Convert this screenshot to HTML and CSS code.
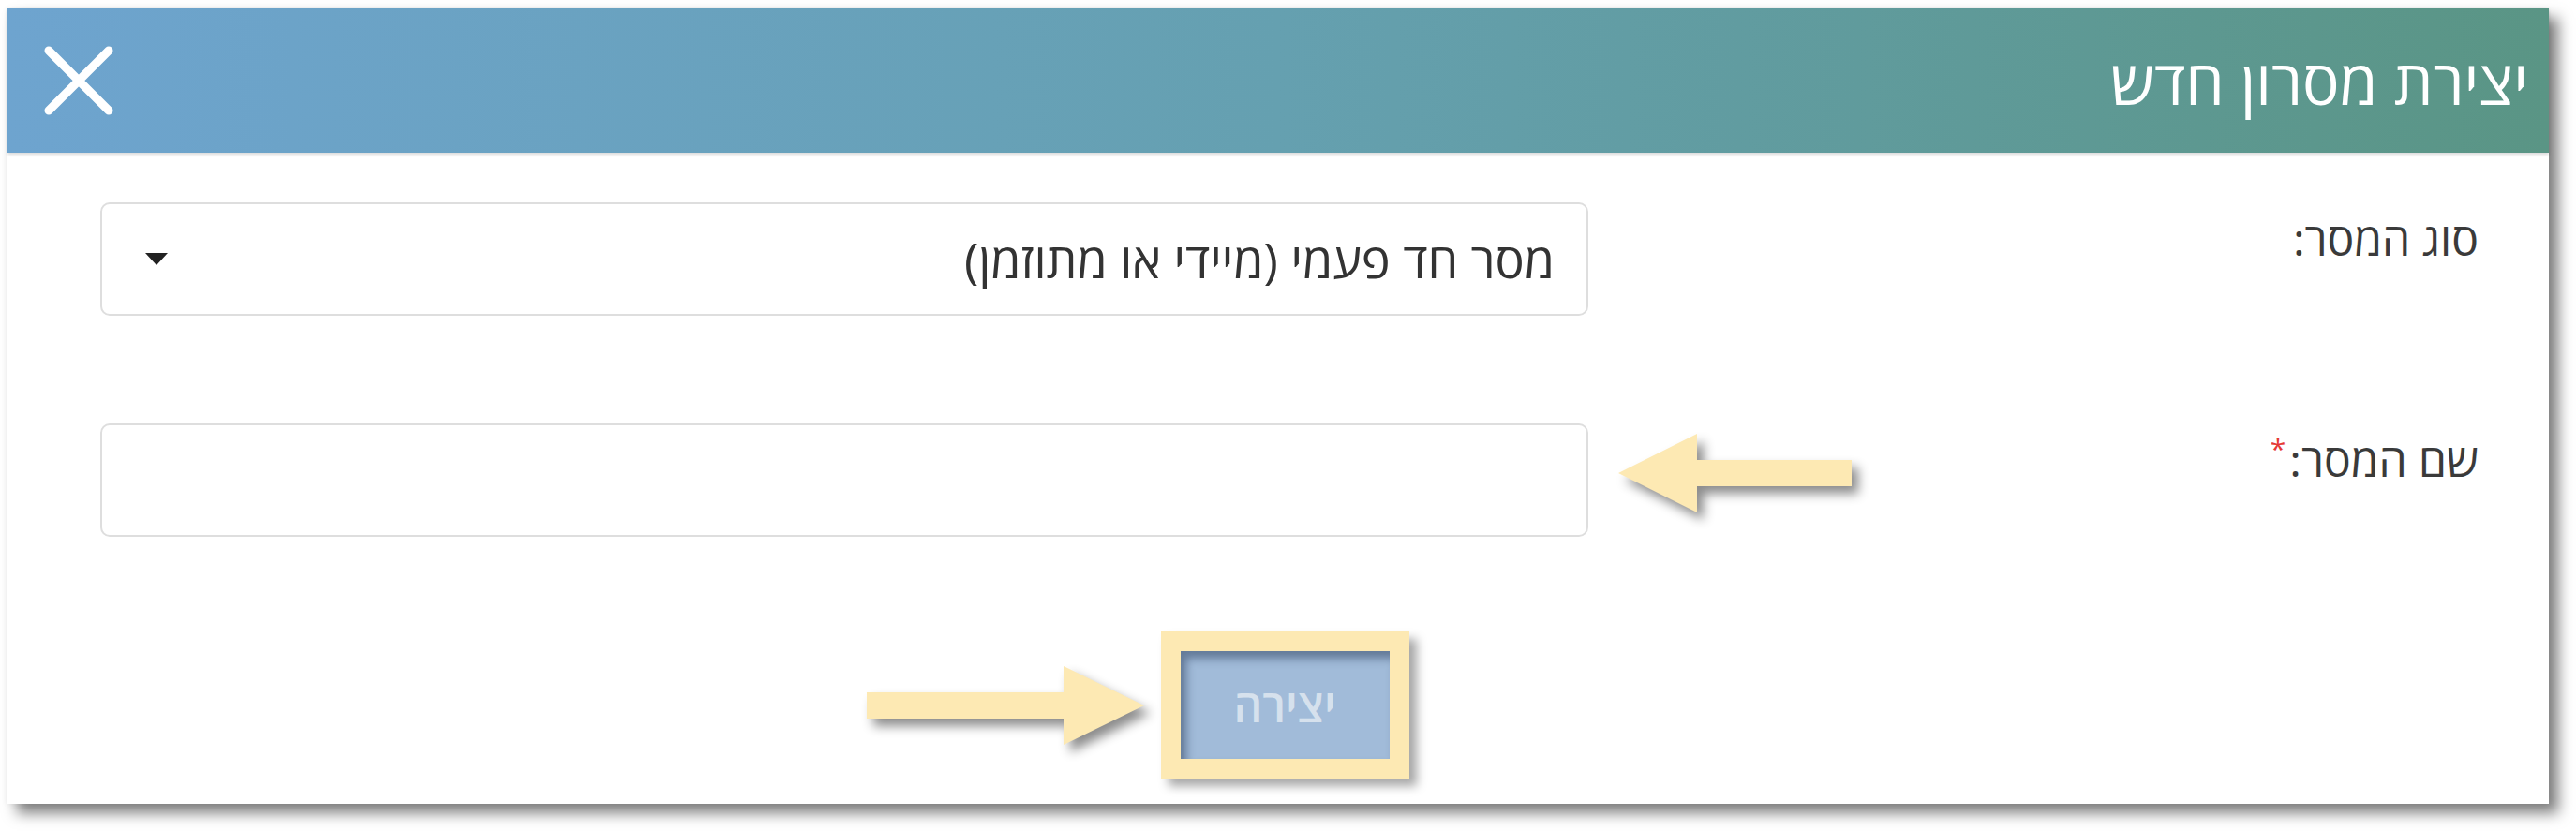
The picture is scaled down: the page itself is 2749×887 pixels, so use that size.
FILE: index.html
```html
<!DOCTYPE html>
<html lang="he" dir="rtl">
<head>
    <meta charset="UTF-8">
    <title>יצירת מסרון חדש</title>
    <link rel="stylesheet" href="styles.css">
</head>
<body>
    <div class="dialog">
        <div class="dialog-head">
            <h1 class="dialog-title">יצירת מסרון חדש</h1>
            <button class="close-btn" type="button" aria-label="סגירה">
                <svg width="74" height="74" viewBox="0 0 74 74">
                    <path d="M5 5 L69 69 M69 5 L5 69" stroke="#fff" stroke-width="9" stroke-linecap="round" fill="none"/>
                </svg>
            </button>
        </div>
        <form class="dialog-body">
            <div class="row">
                <label class="row-label">סוג המסר:</label>
                <div class="field select">
                    <span class="select-text">מסר חד פעמי (מיידי או מתוזמן)</span>
                    <span class="caret"></span>
                </div>
            </div>
            <div class="row row-name">
                <label class="row-label">שם המסר:<span class="req">*</span></label>
                <div class="field-wrap">
                    <div class="field"></div>
                    <!-- annotation arrow -->
                    <svg class="hint-arrow arrow-left" width="249" height="84" viewBox="0 0 249 84">
                        <polygon points="0,42 84,0 84,28 249,28 249,56 84,56 84,84" fill="#fde9b3"/>
                    </svg>
                </div>
            </div>
            <div class="actions">
                <div class="highlight">
                    <svg class="hint-arrow arrow-right" width="296" height="84" viewBox="0 0 296 84">
                        <polygon points="0,28 210,28 210,0 296,42 210,84 210,56 0,56" fill="#fde9b3"/>
                    </svg>
                    <button class="submit" type="button">יצירה</button>
                </div>
            </div>
        </form>
    </div>
</body>
</html>
```

FILE: styles.css
```css
html, body, h1 {margin: 0; padding: 0;}
body {background: #fff; font-family: "Open Sans", "Liberation Sans", sans-serif; color: #333; min-height: 887px; overflow: hidden;}

.dialog {margin: 9px auto 0 8px; width: 2712px; height: 849px; background: #fff; box-shadow: 10px 10px 14px rgba(0,0,0,.5), -1px 0 6px rgba(0,0,0,.06);}

.dialog-head {height: 154px; display: flex; align-items: center; justify-content: space-between; padding: 0 22px 0 39px; background: linear-gradient(to right, #6ea4cf, #65a0b0 50%, #5a9585); box-shadow: 0 2px 3px rgba(0,0,0,.15);}
.dialog-title {font-size: 66px; font-weight: normal; color: #fff; line-height: 1;}
.close-btn {border: 0; padding: 0; background: none; display: flex;}

.dialog-body {padding: 53px 75px 0 99px;}
.row {display: grid; grid-template-columns: 1fr 1588px;}
.row-name {margin-top: 115px;}
.row-label {font-size: 48px; padding-top: 6px; color: #3a3a3a;}
.req {color: #e53935; font-size: 30px; vertical-align: top; margin-right: 4px;}

.field {height: 117px; border: 2px solid #dedede; border-radius: 10px; background: #fff;}
.select {display: flex; align-items: center; justify-content: space-between; padding: 0 34px 0 46px;}
.select-text {font-size: 52px; color: #333;}
.caret {width: 0; height: 0; border-left: 12px solid transparent; border-right: 12px solid transparent; border-top: 13px solid #222;}

.field-wrap {position: relative;}
.hint-arrow {position: absolute; filter: drop-shadow(7px 8px 6px rgba(0,0,0,.45));}
.arrow-left {left: calc(100% + 32px); top: 11px;}

.actions {display: flex; justify-content: center; margin-top: 101px; padding-right: 10px;}
.highlight {position: relative; border: 21px solid #fde9b3; box-shadow: 8px 8px 10px rgba(0,0,0,.35);}
.arrow-right {right: calc(100% + 39px); top: 16px;}
.submit {display: block; width: 223px; height: 115px; border: 0; background: #a1bbd9; color: #d6e1ed; font-family: inherit; font-size: 48px; font-weight: 600; box-shadow: inset 6px 8px 10px rgba(50,70,100,.55);}
```
